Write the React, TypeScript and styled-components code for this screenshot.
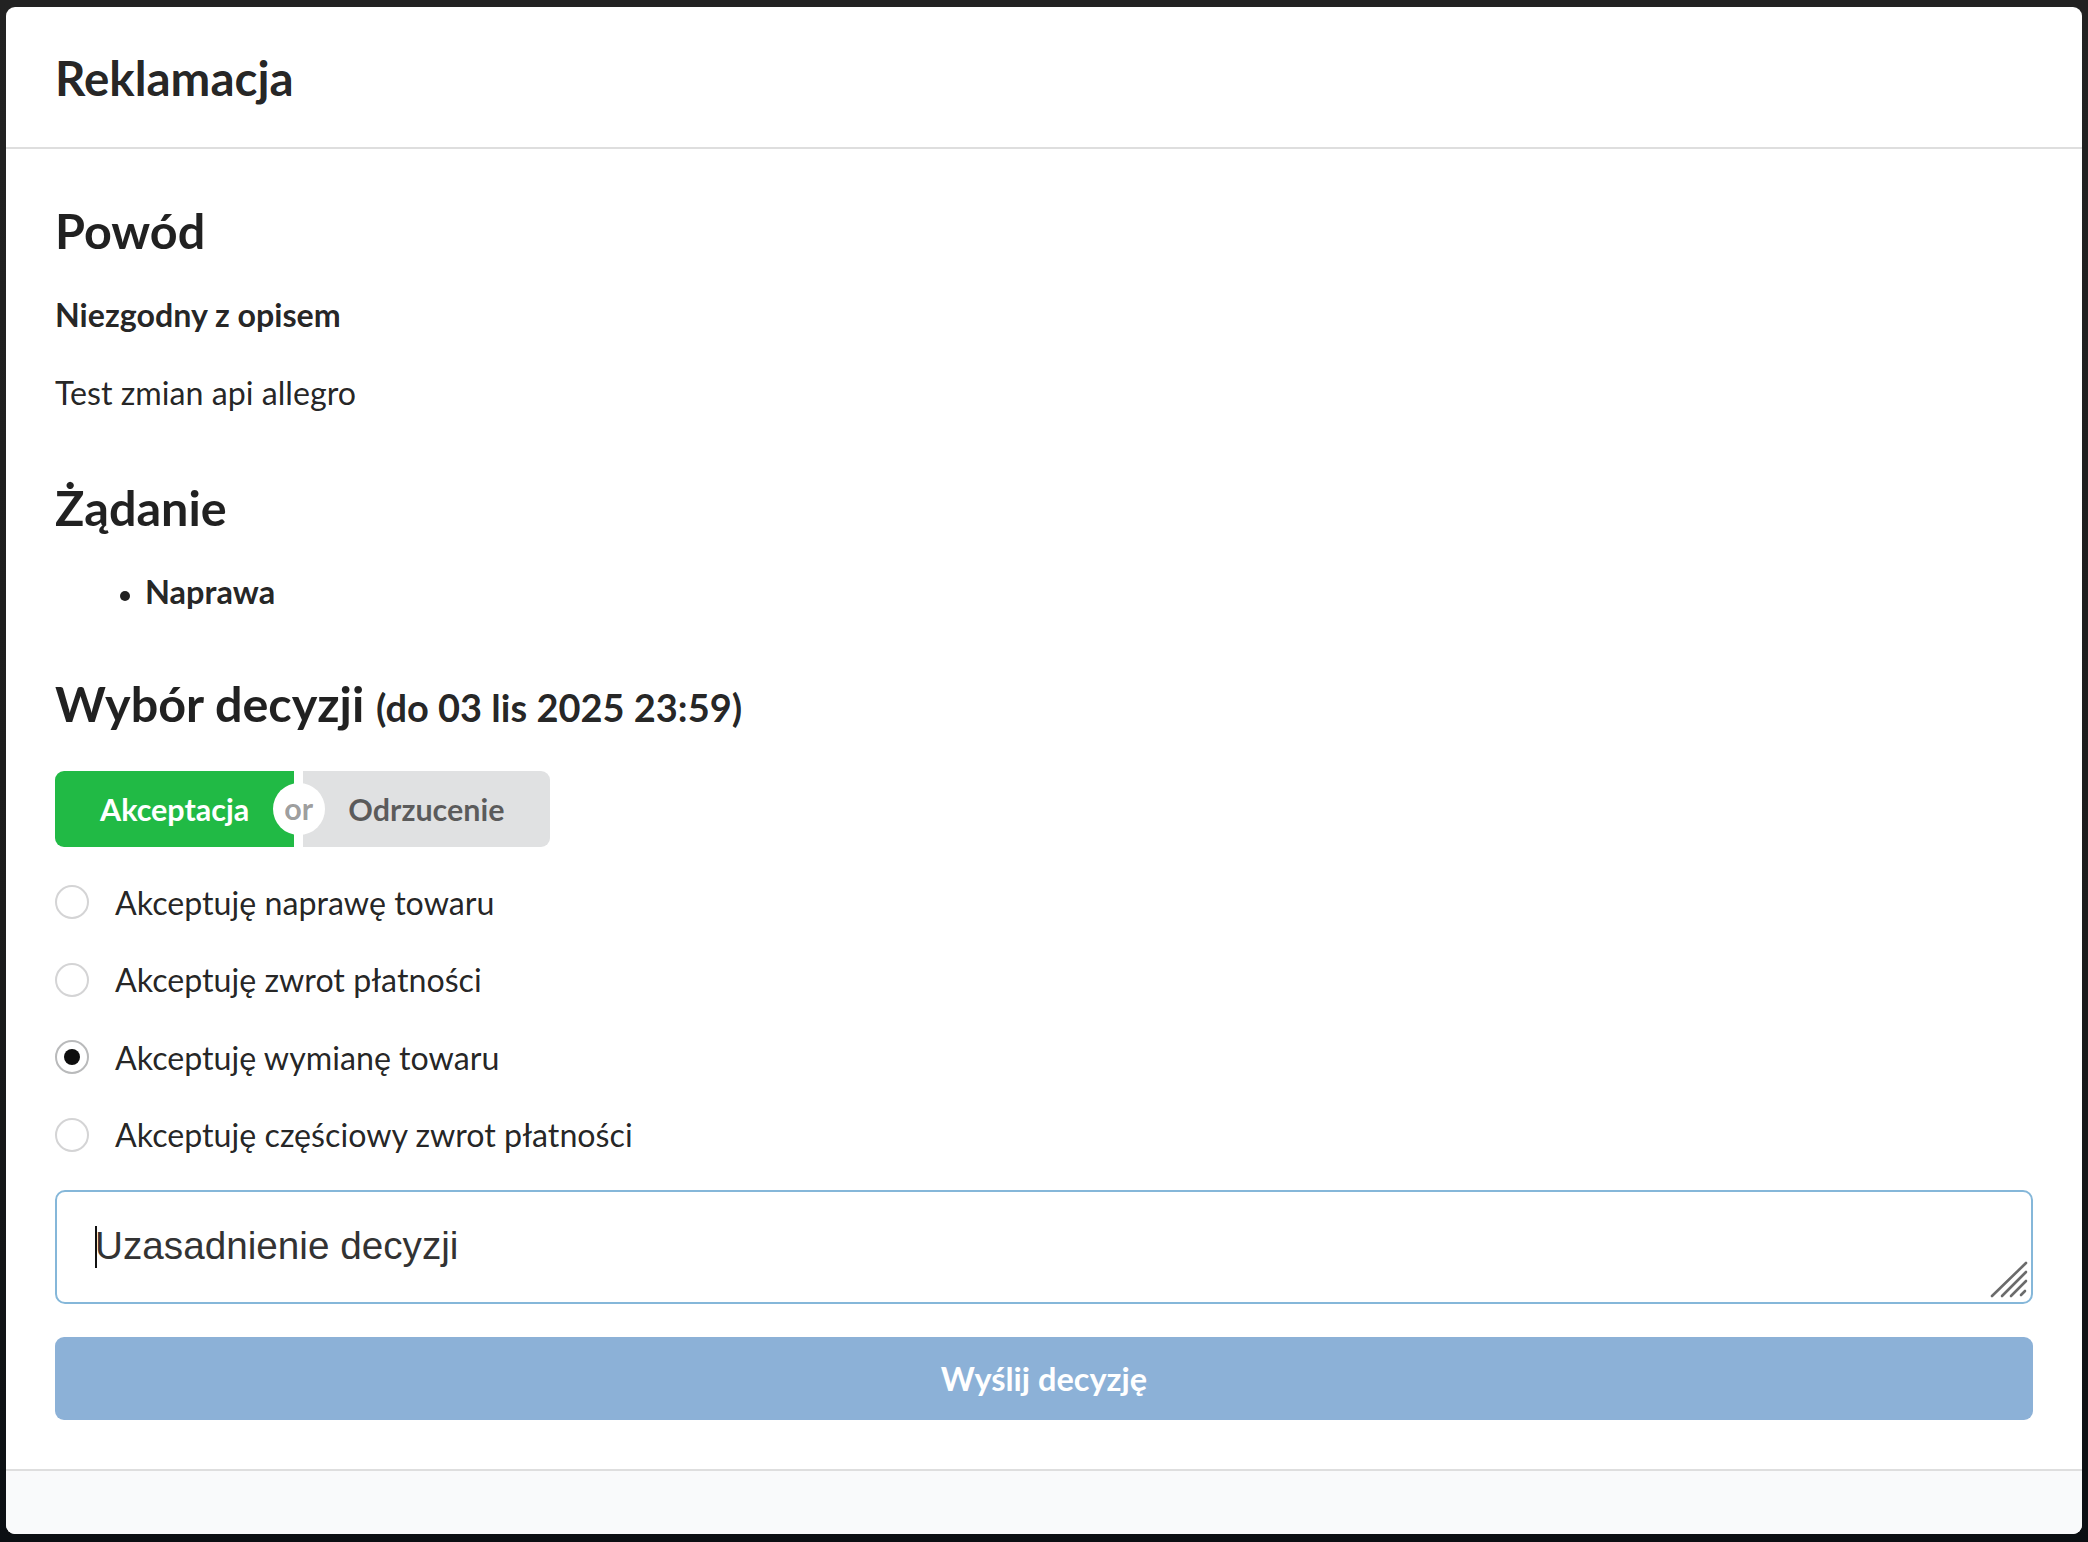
import React from 'react';
import styled, { createGlobalStyle } from 'styled-components';

const Page = createGlobalStyle`
  html, body {
    margin: 0;
    padding: 0;
    background: #1f1f1f;
    font-family: Lato, "Open Sans", "Liberation Sans", sans-serif;
  }
  * { box-sizing: border-box; }
`;

const Backdrop = styled.div`
  min-height: 100vh;
  padding: 7px 6px 8px;
  background: linear-gradient(180deg, #222222 0%, #1c1c1c 60%, #0b0f13 100%);
`;

const Modal = styled.div`
  background: #ffffff;
  border-radius: 9px;
  overflow: hidden;
  display: flex;
  flex-direction: column;
  color: rgba(0, 0, 0, 0.87);
`;

const Header = styled.div`
  padding: 41px 49px 40px;
  font-size: 47.5px;
  line-height: 59px;
  font-weight: 700;
  border-bottom: 2px solid #dedede;
`;

const Content = styled.div`
  padding: 50px 49px 49px;
  display: flex;
  flex-direction: column;
`;

const SectionTitle = styled.h2<{ $gap?: number }>`
  margin: ${({ $gap }) => $gap ?? 0}px 0 0;
  font-size: 48.5px;
  line-height: 62px;
  font-weight: 700;
`;

const Deadline = styled.span`
  font-size: 38px;
  line-height: 1;
`;

const Text = styled.p<{ $gap: number; $bold?: boolean }>`
  margin: ${({ $gap }) => $gap}px 0 0;
  font-size: 32.2px;
  line-height: 44px;
  font-weight: ${({ $bold }) => ($bold ? 700 : 400)};
`;

const List = styled.ul`
  margin: 32px 0 0;
  padding: 0 0 0 65px;
  list-style: none;
`;

const ListItem = styled.li`
  font-size: 32.5px;
  line-height: 44px;
  font-weight: 700;

  &::before {
    content: '';
    display: inline-block;
    vertical-align: middle;
    width: 10px;
    height: 10px;
    margin: 0 15px 0 0;
    border-radius: 50%;
    background: #212121;
  }
`;

const ButtonGroup = styled.div`
  margin-top: 37px;
  display: inline-flex;
  align-self: flex-start;
  height: 76px;
`;

const ChoiceButton = styled.button<{ $active?: boolean; $side: 'left' | 'right' }>`
  border: none;
  margin: 0;
  height: 76px;
  padding: 0 45px;
  font-family: inherit;
  font-size: 30.5px;
  font-weight: 700;
  cursor: pointer;
  background: ${({ $active }) => ($active ? '#21ba45' : '#e0e1e2')};
  color: ${({ $active }) => ($active ? '#ffffff' : 'rgba(0, 0, 0, 0.6)')};
  border-radius: ${({ $side }) => ($side === 'left' ? '9px 0 0 9px' : '0 9px 9px 0')};
`;

const Or = styled.div`
  position: relative;
  width: 9px;
  z-index: 2;

  &::before {
    content: 'or';
    position: absolute;
    top: 50%;
    left: 50%;
    width: 52px;
    height: 52px;
    margin: -26px 0 0 -26px;
    border-radius: 50%;
    background: #ffffff;
    color: rgba(0, 0, 0, 0.4);
    font-size: 30.5px;
    font-weight: 700;
    line-height: 50px;
    text-align: center;
  }
`;

const Options = styled.div`
  margin-top: 33px;
  display: flex;
  flex-direction: column;
  gap: 33.5px;
`;

const Option = styled.label`
  display: flex;
  align-items: center;
  gap: 26px;
  height: 44px;
  font-size: 32.2px;
  cursor: pointer;
`;

const Radio = styled.span<{ $checked?: boolean }>`
  position: relative;
  flex: none;
  width: 34px;
  height: 34px;
  border-radius: 50%;
  border: 2px solid ${({ $checked }) => ($checked ? '#b9babb' : '#d4d4d5')};
  background: #ffffff;

  &::after {
    content: '';
    display: ${({ $checked }) => ($checked ? 'block' : 'none')};
    position: absolute;
    top: 50%;
    left: 50%;
    width: 16px;
    height: 16px;
    margin: -8px 0 0 -8px;
    border-radius: 50%;
    background: rgba(0, 0, 0, 0.95);
  }
`;

const Field = styled.div`
  position: relative;
  margin-top: 33.5px;
`;

const Reason = styled.textarea`
  display: block;
  width: 100%;
  height: 114px;
  padding: 29px 38px;
  border: 2px solid #85b7d9;
  border-radius: 10px;
  outline: none;
  font-family: "Liberation Sans", Arial, sans-serif;
  font-size: 38.7px;
  line-height: 50px;
  color: #333333;
  resize: none;

  &::placeholder {
    color: #333333;
    opacity: 1;
  }
`;

const Caret = styled.span`
  position: absolute;
  left: 40px;
  top: 36px;
  width: 2px;
  height: 42px;
  background: #111111;
  pointer-events: none;
`;

const Grip = styled.svg`
  position: absolute;
  right: 3px;
  bottom: 4px;
  width: 40px;
  height: 40px;
  pointer-events: none;
`;

const Submit = styled.button`
  margin-top: 33px;
  width: 100%;
  height: 82.5px;
  border: none;
  border-radius: 9px;
  background: #8cb1d7;
  color: #ffffff;
  font-family: inherit;
  font-size: 32.5px;
  font-weight: 700;
  cursor: default;
`;

const Actions = styled.div`
  height: 65px;
  background: #f9fafb;
  border-top: 2px solid #dedede;
`;

const options = [
  'Akceptuję naprawę towaru',
  'Akceptuję zwrot płatności',
  'Akceptuję wymianę towaru',
  'Akceptuję częściowy zwrot płatności',
];

export default function App() {
  const [choice, setChoice] = React.useState(2);
  const [accept, setAccept] = React.useState(true);

  return (
    <>
      <Page />
      <Backdrop>
        <Modal>
          <Header>Reklamacja</Header>
          <Content>
            <SectionTitle>Powód</SectionTitle>
            <Text $gap={32} $bold>Niezgodny z opisem</Text>
            <Text $gap={34}>Test zmian api allegro</Text>

            <SectionTitle $gap={61}>Żądanie</SectionTitle>
            <List>
              <ListItem>Naprawa</ListItem>
            </List>

            <SectionTitle $gap={58}>
              Wybór decyzji <Deadline>(do 03 lis 2025 23:59)</Deadline>
            </SectionTitle>
            <ButtonGroup>
              <ChoiceButton $side="left" $active={accept} onClick={() => setAccept(true)}>
                Akceptacja
              </ChoiceButton>
              <Or />
              <ChoiceButton $side="right" $active={false} onClick={() => setAccept(false)}>
                Odrzucenie
              </ChoiceButton>
            </ButtonGroup>

            <Options>
              {options.map((label, i) => (
                <Option key={label} onClick={() => setChoice(i)}>
                  <Radio $checked={choice === i} />
                  {label}
                </Option>
              ))}
            </Options>

            <Field>
              <Reason rows={1} placeholder="Uzasadnienie decyzji" />
              <Caret />
              <Grip viewBox="0 0 40 40">
                <g stroke="#6b6b6b" strokeWidth="2.6" strokeLinecap="round">
                  <line x1="2" y1="36" x2="36" y2="3" />
                  <line x1="12" y1="36" x2="36" y2="12" />
                  <line x1="21" y1="36" x2="36" y2="21" />
                  <line x1="31" y1="35" x2="35" y2="31" />
                </g>
              </Grip>
            </Field>
            <Submit type="button">Wyślij decyzję</Submit>
          </Content>
          <Actions />
        </Modal>
      </Backdrop>
    </>
  );
}
